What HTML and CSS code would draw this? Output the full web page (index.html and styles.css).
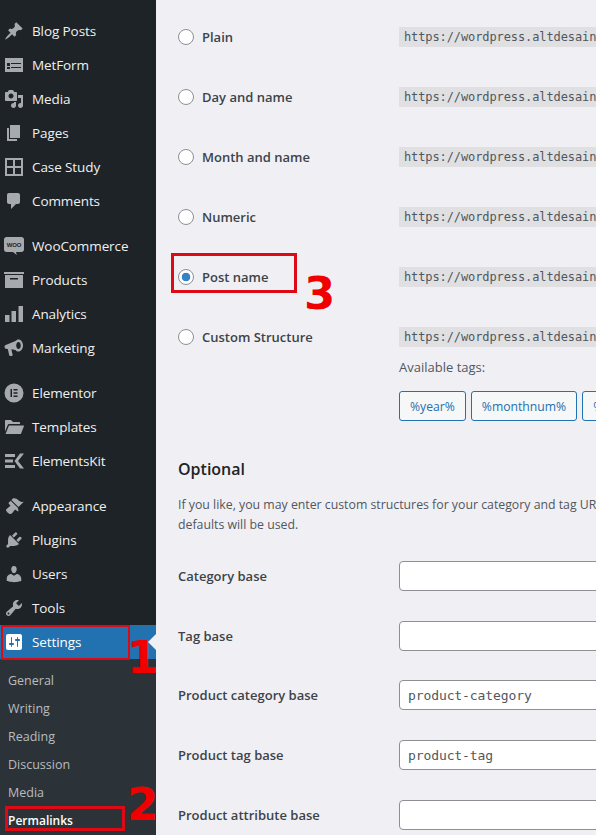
FILE: index.html
```html
<!DOCTYPE html>
<html lang="en">
<head>
    <meta charset="UTF-8">
    <meta name="viewport" content="width=device-width, initial-scale=1.0">
    <title>Permalink Settings</title>
    <link rel="stylesheet" href="styles.css">
</head>

<body>
    <nav class="sidebar">
        <ul class="menu">
            <li class="menu-item">
                <svg class="icon" viewBox="0 0 20 20"><path d="M10.44 3.02l1.82-1.82 6.36 6.35-1.83 1.82c-1.05-.68-2.48-.57-3.41.36l-.75.75c-.92.93-1.04 2.35-.35 3.41l-1.83 1.82-2.41-2.41-2.8 2.79c-.42.42-3.38 2.71-3.8 2.29s1.86-3.39 2.28-3.81l2.79-2.79L4.1 9.36l1.83-1.82c1.05.69 2.48.57 3.4-.36l.75-.75c.93-.92 1.05-2.35.36-3.41z"/></svg>
                Blog Posts
            </li>
            <li class="menu-item">
                <svg class="icon" viewBox="0 0 20 20"><path fill-rule="evenodd" d="M1 3h18v14H1zM3 8v3h3V8zM7 8v1h10V8zM3 12v2h3v-2zM7 12v1h10v-1z"/></svg>
                MetForm
            </li>
            <li class="menu-item">
                <svg class="icon" viewBox="0 0 20 20"><path d="M13 11V4c0-.55-.45-1-1-1h-1.67L9 1H5L3.67 3H2c-.55 0-1 .45-1 1v7c0 .55.45 1 1 1h10c.55 0 1-.45 1-1zM7 4.500c1.38 0 2.500 1.120 2.500 2.500S8.380 9.500 7 9.500 4.500 8.380 4.500 7 5.620 4.500 7 4.500zM14 6h5v10.500c0 1.380-1.120 2.500-2.500 2.500S14 17.880 14 16.500s1.120-2.500 2.500-2.500c.17 0 .34.02.5.05V9h-3V6zm-4 8.050V13h2v3.500c0 1.380-1.120 2.500-2.500 2.500S7 17.880 7 16.500 8.120 14 9.500 14c.17 0 .34.02.5.05z"/></svg>
                Media
            </li>
            <li class="menu-item">
                <svg class="icon" viewBox="0 0 20 20"><path d="M6 15V2h10v13H6zm-1 1h8v2H3V5h2v11z"/></svg>
                Pages
            </li>
            <li class="menu-item">
                <svg class="icon" viewBox="0 0 20 20"><path fill-rule="evenodd" d="M1 1h18v18H1zM3 3v6h6V3zM11 3v6h6V3zM3 11v6h6v-6zM11 11v6h6v-6z"/></svg>
                Case Study
            </li>
            <li class="menu-item">
                <svg class="icon" viewBox="0 0 20 20"><path d="M5 2h9c1.100 0 2 .9 2 2v7c0 1.100-.9 2-2 2h-2l-5 5v-5H5c-1.100 0-2-.9-2-2V4c0-1.100.9-2 2-2z"/></svg>
                Comments
            </li>
            <li class="menu-sep"></li>
            <li class="menu-item">
                <svg class="icon" viewBox="0 0 20 20"><path d="M2.500 1h15C18.900 1 20 2.100 20 3.500v10c0 1.400-1.100 2.500-2.500 2.500H12l.8 3-3.800-3H2.500C1.100 16 0 14.900 0 13.500v-10C0 2.100 1.100 1 2.500 1z"/><text class="woo-text" x="10" y="10.800" text-anchor="middle">WOO</text></svg>
                WooCommerce
            </li>
            <li class="menu-item">
                <svg class="icon" viewBox="0 0 20 20"><path fill-rule="evenodd" d="M0 2h20v2H0zM1 5h18v13H1zM6 8v1.500h8V8z"/></svg>
                Products
            </li>
            <li class="menu-item">
                <svg class="icon" viewBox="0 0 20 20"><path d="M1 11h4.500v7H1zM7.500 7H12v11H7.500zM14.500 2H19v16h-4.500z"/></svg>
                Analytics
            </li>
            <li class="menu-item">
                <svg class="icon" viewBox="0 0 20 20"><path fill-rule="evenodd" d="M14.500 1.500c2.500 0 4.500 2.700 4.500 6s-2 6-4.500 6c-1.200 0-2.300-.6-3-1.600L7.300 11.200l1.300 5.600c.1.500-.2 1.200-.8 1.200H6.200c-.5 0-.8-.3-1-.8L3.800 11H3c-1.300 0-2.500-1-2.500-2.300S1.700 6.400 3 6.400l8.500-3.300c.7-1 1.800-1.600 3-1.600zm0 2.500c-1.300 0-2.300 1.600-2.300 3.500s1 3.500 2.300 3.500 2.300-1.600 2.300-3.500S15.800 4 14.500 4z"/></svg>
                Marketing
            </li>
            <li class="menu-sep"></li>
            <li class="menu-item">
                <svg class="icon" viewBox="0 0 20 20"><path fill-rule="evenodd" d="M10 0.500a9.500 9.500 0 1 0 0 19 9.500 9.500 0 0 0 0-19zM6.500 6h1.500v8H6.500zM9.500 6h4v1.500h-4zM9.500 9.250h4v1.500h-4zM9.500 12.500h4V14h-4z"/></svg>
                Elementor
            </li>
            <li class="menu-item">
                <svg class="icon" viewBox="0 0 20 20"><path d="M1 4c0-.6.4-1 1-1h5l2 2h6c.6 0 1 .4 1 1v1H5.500c-.9 0-1.600.5-1.900 1.300L1 14.500z"/><path d="M5 8.500h14.500c.4 0 .6.300.5.600l-2.900 7.300c-.1.400-.5.600-.9.600H1.500z"/></svg>
                Templates
            </li>
            <li class="menu-item">
                <svg class="icon" viewBox="0 0 20 20"><path d="M1 3h10v3H1zM1 8.500h8v3H1zM1 14h10v3H1zM16 2.500h4L14 10l6 7.500h-4L10.500 10z"/></svg>
                ElementsKit
            </li>
            <li class="menu-sep"></li>
            <li class="menu-item">
                <svg class="icon" viewBox="0 0 20 20"><path d="M14.480 11.060L7.410 3.990l1.500-1.500c.5-.56 2.300-.47 3.510.32 1.210.8 1.430 1.280 2.910 2.100 1.180.64 2.450 1.260 4.450.85zm-.71.71L6.700 4.700 4.930 6.470c-.39.39-.39 1.020 0 1.410l1.060 1.060c.39.39.39 1.030 0 1.420-.6.6-1.430 1.150-2.210 1.730-.35.26-.7.530-1.010.84C1.430 13.270 2 15 3.500 16.500s3.230 2.070 4.570.73c.31-.31.580-.66.840-1.010.58-.78 1.130-1.610 1.730-2.210.39-.39 1.030-.39 1.420 0l1.060 1.060c.39.39 1.020.39 1.410 0z"/></svg>
                Appearance
            </li>
            <li class="menu-item">
                <svg class="icon" viewBox="0 0 20 20"><path d="M13.110 4.360L9.870 7.600 8 5.730l3.240-3.240c.35-.34 1.050-.2 1.560.32.520.51.660 1.210.31 1.550zm-8 1.770l.91-1.120 9.010 9.010-1.190.84c-.71.710-2.630 1.160-3.820 1.160H6.140L4.900 17.260c-.59.590-1.540.590-2.120 0-.59-.58-.59-1.530 0-2.120l1.240-1.240v-3.880c0-1.130.4-3.190 1.090-3.890zm7.260 3.970l3.240-3.240c.34-.35 1.040-.21 1.550.31.520.51.660 1.210.31 1.550l-3.240 3.250z"/></svg>
                Plugins
            </li>
            <li class="menu-item">
                <svg class="icon" viewBox="0 0 20 20"><path d="M10 9.250c-2.270 0-2.730-3.440-2.730-3.440C7 4.020 7.820 2 9.970 2c2.160 0 2.980 2.020 2.710 3.810 0 0-.41 3.440-2.680 3.440zm0 2.570L12.720 10c2.390 0 4.520 2.330 4.520 4.530v2.490s-3.650 1.130-7.240 1.130c-3.650 0-7.240-1.130-7.240-1.130v-2.490c0-2.250 1.940-4.480 4.470-4.480z"/></svg>
                Users
            </li>
            <li class="menu-item">
                <svg class="icon" viewBox="0 0 20 20"><path d="M16.680 9.770c-1.340 1.340-3.300 1.670-4.950.99l-5.410 6.520c-.99.990-2.590.990-3.580 0s-.99-2.590 0-3.570l6.520-5.420c-.68-1.650-.35-3.610.99-4.950 1.280-1.280 3.120-1.620 4.720-1.060l-2.890 2.890 2.820 2.820 2.860-2.870c.53 1.580.18 3.390-1.080 4.650zM3.810 16.210c.4.390 1.040.39 1.430 0 .4-.4.4-1.040 0-1.430-.39-.4-1.030-.4-1.430 0-.39.39-.39 1.030 0 1.430z"/></svg>
                Tools
            </li>
            <li class="menu-item current">
                <svg class="icon" viewBox="0 0 20 20"><path fill-rule="evenodd" d="M18 16V4c0-1.100-.9-2-2-2H4c-1.100 0-2 .9-2 2v12c0 1.100.9 2 2 2h12c1.100 0 2-.9 2-2zM8 11h1c.55 0 1 .45 1 1s-.45 1-1 1H8v1.500c0 .28-.22.5-.5.5s-.5-.22-.5-.5V13H6c-.55 0-1-.45-1-1s.45-1 1-1h1V5.500c0-.28.22-.5.5-.5s.5.22.5.5V11zm5-2h-1c-.55 0-1-.45-1-1s.45-1 1-1h1V5.500c0-.28.22-.5.5-.5s.5.22.5.5V7h1c.55 0 1 .45 1 1s-.45 1-1 1h-1v5.500c0 .28-.22.5-.5.5s-.5-.22-.5-.5V9z"/></svg>
                Settings
            </li>
        </ul>
        <ul class="submenu">
            <li>General</li>
            <li>Writing</li>
            <li>Reading</li>
            <li>Discussion</li>
            <li>Media</li>
            <li class="active">Permalinks</li>
        </ul>
        <div class="mark mark-settings"></div>
        <div class="mark mark-permalinks"></div>
        <span class="num num-1">1</span>
        <span class="num num-2">2</span>
    </nav>

    <main class="content">
        <div class="choices">
            <div class="choice">
                <label class="choice-label"><span class="radio"></span>Plain</label>
                <code>https://wordpress.altdesain</code>
            </div>
            <div class="choice">
                <label class="choice-label"><span class="radio"></span>Day and name</label>
                <code>https://wordpress.altdesain</code>
            </div>
            <div class="choice">
                <label class="choice-label"><span class="radio"></span>Month and name</label>
                <code>https://wordpress.altdesain</code>
            </div>
            <div class="choice">
                <label class="choice-label"><span class="radio"></span>Numeric</label>
                <code>https://wordpress.altdesain</code>
            </div>
            <div class="choice">
                <label class="choice-label"><span class="radio checked"></span>Post name</label>
                <code>https://wordpress.altdesain</code>
            </div>
            <div class="choice custom">
                <label class="choice-label"><span class="radio"></span>Custom Structure</label>
                <div class="custom-body">
                    <code>https://wordpress.altdesain</code>
                    <p class="tags-title">Available tags:</p>
                    <div class="tags">
                        <button class="tag">%year%</button>
                        <button class="tag">%monthnum%</button>
                        <button class="tag">%day%</button>
                    </div>
                </div>
            </div>
        </div>

        <h2>Optional</h2>
        <p class="intro">If you like, you may enter custom structures for your category and tag URLs here. If you leave these blank the<br>defaults will be used.</p>

        <div class="field"><label>Category base</label><input type="text"></div>
        <div class="field"><label>Tag base</label><input type="text"></div>
        <div class="field tight"><label>Product category base</label><input type="text" value="product-category"></div>
        <div class="field"><label>Product tag base</label><input type="text" value="product-tag"></div>
        <div class="field"><label>Product attribute base</label><input type="text"></div>

        <div class="mark mark-postname"></div>
        <span class="num num-3">3</span>
    </main>
</body>

</html>
```

FILE: styles.css
```css
html {
    overflow: hidden;
}

body {
    display: flex;
    width: 596px;
    height: 835px;
    margin: 0;
    overflow: hidden;
    background-color: #f0f0f4;
    color: #1d2327;
    font-family: "Open Sans", sans-serif;
    font-size: 13px;
}

ul {
    margin: 0;
    padding: 0;
    list-style-type: none;
}

/* sidebar */
.sidebar {
    position: relative;
    flex: 0 0 156px;
    background-color: #1d2327;
}

.menu {
    padding-top: 14px;
}

.menu-item {
    position: relative;
    display: flex;
    box-sizing: border-box;
    align-items: center;
    gap: 8px;
    height: 34px;
    padding: 0 0 1px 4px;
    color: #f0f0f1;
    font-size: 13.500px;
    letter-spacing: -0.1px;
}

.menu-sep {
    height: 11px;
}

.icon {
    flex: 0 0 20px;
    width: 20px;
    height: 20px;
    margin-top: 1px;
    fill: #a7aaad;
}

.woo-text {
    fill: #1d2327;
    font-family: "Liberation Sans", sans-serif;
    font-size: 6px;
    font-weight: 700;
}

.menu-item.current {
    background-color: #2271b1;
    color: #fff;
}

.menu-item.current .icon {
    fill: #fff;
}

.menu-item.current::after {
    content: '';
    position: absolute;
    top: 9px;
    right: 0;
    border: 8px solid transparent;
    border-right-color: #f0f0f4;
}

.submenu {
    padding: 7px 0;
    background-color: #2c3338;
}

.submenu li {
    display: flex;
    align-items: center;
    height: 28px;
    padding-left: 8px;
    color: #b9bcbf;
    font-size: 12.500px;
}

.submenu li.active {
    color: #fff;
    font-size: 12px;
    font-weight: 600;
}

/* red annotations */
.mark {
    position: absolute;
    box-sizing: border-box;
    border: 3px solid #dc0a14;
}

.mark-settings {
    top: 625px;
    left: 1px;
    width: 129px;
    height: 35px;
    border-width: 2px;
}

.mark-permalinks {
    top: 806px;
    left: 5px;
    width: 120px;
    height: 25px;
}

.mark-postname {
    top: 253px;
    left: 171px;
    width: 126px;
    height: 40px;
}

.num {
    position: absolute;
    color: #f00000;
    font-family: "DejaVu Sans", sans-serif;
    font-size: 45px;
    font-weight: 700;
    line-height: 45px;
}

.num-1 {
    top: 635px;
    left: 127px;
}

.num-2 {
    top: 782px;
    left: 127px;
}

.num-3 {
    top: 271px;
    left: 304px;
}

/* main column */
.content {
    flex: 1;
    min-width: 0;
    padding: 7px 0 0 22px;
}

.choice {
    display: flex;
    align-items: center;
    height: 60px;
}

.choice-label {
    display: flex;
    flex: 0 0 221px;
    align-items: center;
    gap: 8px;
    font-weight: 600;
    color: #3c434a;
}

.radio {
    box-sizing: border-box;
    width: 16px;
    height: 16px;
    border: 1px solid #8c8f94;
    border-radius: 50%;
    background-color: #fff;
}

.radio.checked {
    background: radial-gradient(circle, #3582c4 0, #3582c4 4px, #fff 4.600px);
}

code {
    display: block;
    padding: 1px 5px 0;
    background-color: #e0e0e2;
    color: #50575e;
    font-family: "DejaVu Sans Mono", monospace;
    font-size: 12px;
    letter-spacing: -0.1px;
    line-height: 19px;
    white-space: nowrap;
}

.choice.custom {
    align-items: flex-start;
    padding-top: 20px;
    height: auto;
}

.choice.custom .choice-label {
    height: 20px;
}

.custom-body {
    flex: none;
}

.tags-title {
    margin: 10px 0 14px;
    color: #50575e;
    line-height: 20px;
}

.tags {
    display: flex;
    gap: 5px;
}

.tag {
    box-sizing: border-box;
    height: 30px;
    padding: 0 10px;
    border: 1px solid #2271b1;
    border-radius: 3px;
    background-color: #f6f7f7;
    color: #2271b1;
    font-family: inherit;
    font-size: 12.200px;
}

h2 {
    margin: 36px 0 0;
    font-size: 16px;
    font-weight: 600;
    line-height: 24px;
}

.intro {
    margin: 14px 0 0;
    color: #50575e;
    font-size: 12.300px;
    line-height: 20px;
    white-space: nowrap;
}

.field {
    display: flex;
    align-items: center;
    height: 30px;
    margin-top: 30px;
}

.intro + .field {
    margin-top: 26px;
}

.field.tight {
    margin-top: 29px;
}

.field label {
    flex: 0 0 221px;
    font-weight: 600;
    color: #3c434a;
}

.field input {
    flex: none;
    box-sizing: border-box;
    width: 320px;
    height: 30px;
    padding: 0 8px;
    border: 1px solid #8c8f94;
    border-radius: 4px;
    background-color: #fff;
    color: #50575e;
    font-family: "DejaVu Sans Mono", monospace;
    font-size: 13px;
    letter-spacing: -0.1px;
}
```
